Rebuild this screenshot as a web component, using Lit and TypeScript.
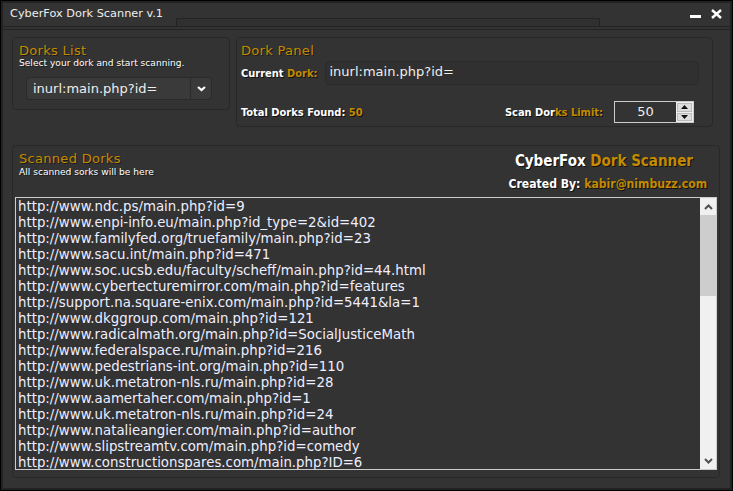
import { LitElement, css, html } from "lit";
import { customElement } from "lit/decorators.js";

const URLS = [
  "http://www.ndc.ps/main.php?id=9",
  "http://www.enpi-info.eu/main.php?id_type=2&id=402",
  "http://www.familyfed.org/truefamily/main.php?id=23",
  "http://www.sacu.int/main.php?id=471",
  "http://www.soc.ucsb.edu/faculty/scheff/main.php?id=44.html",
  "http://www.cybertecturemirror.com/main.php?id=features",
  "http://support.na.square-enix.com/main.php?id=5441&la=1",
  "http://www.dkggroup.com/main.php?id=121",
  "http://www.radicalmath.org/main.php?id=SocialJusticeMath",
  "http://www.federalspace.ru/main.php?id=216",
  "http://www.pedestrians-int.org/main.php?id=110",
  "http://www.uk.metatron-nls.ru/main.php?id=28",
  "http://www.aamertaher.com/main.php?id=1",
  "http://www.uk.metatron-nls.ru/main.php?id=24",
  "http://www.natalieangier.com/main.php?id=author",
  "http://www.slipstreamtv.com/main.php?id=comedy",
  "http://www.constructionspares.com/main.php?ID=6",
];

@customElement("app-root")
export class AppRoot extends LitElement {
  render() {
    return html`
      <div class="window">
        <header class="titlebar">
          <div class="tab">CyberFox Dork Scanner v.1</div>
          <div class="tab-rest"></div>
          <div class="controls">
            <span class="min"></span>
            <svg class="close" width="11" height="10" viewBox="0 0 11 10">
              <path d="M1 1 L10 9 M10 1 L1 9" stroke="#fff" stroke-width="2.4" fill="none" />
            </svg>
          </div>
        </header>
        <div class="rule"></div>

        <div class="top-row">
          <section class="panel list-panel">
            <h2>Dorks List</h2>
            <p class="hint">Select your dork and start scanning.</p>
            <div class="combo">
              <span class="combo-value">inurl:main.php?id=</span>
              <span class="combo-btn">
                <svg width="9" height="6" viewBox="0 0 9 6">
                  <path d="M1 1 L4.5 4 L8 1" stroke="#fff" stroke-width="2.2" fill="none" />
                </svg>
              </span>
            </div>
          </section>

          <section class="panel dork-panel">
            <h2>Dork Panel</h2>
            <div class="current">
              <span class="label">Current <b>Dork:</b></span>
              <div class="field">inurl:main.php?id=</div>
            </div>
            <div class="stats">
              <span class="label">Total Dorks Found: <b>50</b></span>
              <div class="limit">
                <span class="label">Scan Dor<b>ks Limit:</b></span>
                <div class="spinner">
                  <span class="spin-value">50</span>
                  <span class="spin-btns">
                    <i><svg width="7" height="4" viewBox="0 0 7 4"><path d="M3.5 0 L7 4 H0 Z" fill="#111" /></svg></i>
                    <i><svg width="7" height="4" viewBox="0 0 7 4"><path d="M0 0 H7 L3.5 4 Z" fill="#111" /></svg></i>
                  </span>
                </div>
              </div>
            </div>
          </section>
        </div>

        <section class="panel scanned">
          <div class="scanned-head">
            <div>
              <h2>Scanned Dorks</h2>
              <p class="hint scanned-hint">All scanned sorks will be here</p>
            </div>
            <div class="brand">
              <div class="brand-name">CyberFox <b>Dork Scanner</b></div>
              <div class="brand-by">Created By: <b>kabir@nimbuzz.com</b></div>
            </div>
          </div>
          <div class="results">
            <div class="lines">${URLS.map((u) => html`<div>${u}</div>`)}</div>
            <div class="scroll">
              <span class="arrow">
                <svg width="9" height="6" viewBox="0 0 9 6"><path d="M1 5 L4.5 1.5 L8 5" stroke="#505050" stroke-width="2" fill="none" /></svg>
              </span>
              <span class="thumb"></span>
              <span class="track"></span>
              <span class="arrow">
                <svg width="9" height="6" viewBox="0 0 9 6"><path d="M1 1 L4.5 4.5 L8 1" stroke="#505050" stroke-width="2" fill="none" /></svg>
              </span>
            </div>
          </div>
        </section>
      </div>
    `;
  }

  static styles = css`
    :host {
      display: block;
      width: 733px;
      height: 491px;
      font-family: "DejaVu Sans", Verdana, sans-serif;
      color: #fff;
    }

    * {
      box-sizing: border-box;
    }

    .window {
      width: 733px;
      height: 491px;
      background: #333;
      border: 1px solid #000;
      box-shadow: inset 0 0 0 2px #222;
      display: flex;
      flex-direction: column;
      overflow: hidden;
    }

    .titlebar {
      height: 26px;
      flex: none;
      display: flex;
      align-items: flex-end;
      border-bottom: 1px solid #232323;
      padding: 2px 2px 0;
    }

    .rule {
      height: 3px;
      flex: none;
      border-bottom: 1px solid #232323;
    }

    .tab {
      width: 173px;
      height: 23px;
      flex: none;
      padding: 4px 0 0 7px;
      font-size: 11.3px;
      line-height: 14px;
      color: #eee;
    }

    .tab-rest {
      width: 424px;
      height: 8px;
      flex: none;
      border: 1px solid #232323;
      border-bottom: none;
      background: #303030;
    }

    .controls {
      margin-left: auto;
      align-self: flex-start;
      display: flex;
      align-items: center;
      gap: 10px;
      padding: 6px 8px 0 0;
    }

    .min {
      width: 11px;
      height: 3px;
      margin-top: 5px;
      background: #fff;
    }

    .top-row {
      display: flex;
      align-items: flex-start;
      gap: 6px;
      padding: 7px 0 0 11px;
    }

    .panel {
      background: #333;
      border: 1px solid #282828;
      border-radius: 4px;
    }

    .list-panel {
      width: 218px;
      height: 73px;
      padding: 5px 6px;
    }

    .dork-panel {
      width: 477px;
      height: 90px;
      padding: 5px 4px;
    }

    h2 {
      margin: 0;
      font-size: 13px;
      line-height: 15px;
      font-weight: normal;
      letter-spacing: 0.3px;
      color: #c48a00;
      text-shadow: 1px 1px 0 #1c1c1c;
    }

    .hint {
      margin: 0;
      font-size: 9.1px;
      line-height: 11px;
      color: #fff;
      text-shadow: 1px 1px 0 #1c1c1c;
    }

    .scanned-hint {
      margin-top: 1px;
    }

    .combo {
      display: flex;
      align-items: stretch;
      width: 186px;
      height: 23px;
      margin: 8px 0 0 7px;
      border: 1px solid #2a2a2a;
      border-radius: 4px;
      background: #3a3a3a;
    }

    .combo-value {
      flex: 1;
      padding: 0 6px;
      font-size: 13px;
      line-height: 22px;
      color: #eee;
    }

    .combo-btn {
      width: 21px;
      display: flex;
      align-items: center;
      justify-content: center;
      border-left: 1px solid #2a2a2a;
    }

    .label {
      font-family: "DejaVu Sans Condensed", "DejaVu Sans", sans-serif;
      font-size: 11px;
      font-weight: bold;
      color: #fff;
      text-shadow: 1px 1px 0 #111;
      white-space: nowrap;
    }

    .label b,
    .brand b {
      color: #c48a00;
    }

    .current {
      display: flex;
      align-items: center;
      gap: 8px;
      margin-top: 3px;
    }

    .field {
      width: 374px;
      height: 24px;
      padding: 0 3px;
      border: 1px solid #2a2a2a;
      border-radius: 4px;
      background: #303030;
      font-size: 13px;
      line-height: 20px;
      color: #eee;
    }

    .stats {
      display: flex;
      align-items: center;
      justify-content: space-between;
      margin-top: 16px;
      padding-right: 14px;
    }

    .limit {
      display: flex;
      align-items: center;
      gap: 11px;
    }

    .spinner {
      width: 80px;
      height: 22px;
      display: flex;
      border: 1px solid #ccc;
      background: #333;
    }

    .spin-value {
      flex: 1;
      text-align: center;
      font-size: 13px;
      line-height: 19px;
      color: #eee;
    }

    .spin-btns {
      width: 17px;
      display: flex;
      flex-direction: column;
      gap: 1px;
      padding: 1px;
      background: #eee;
    }

    .spin-btns i {
      flex: 1;
      display: flex;
      align-items: center;
      justify-content: center;
      background: #ddd;
      border: 1px solid #bbb;
    }

    .scanned {
      width: 708px;
      height: 333px;
      margin: 18px 0 0 11px;
      padding: 5px 2px 7px;
      display: flex;
      flex-direction: column;
    }

    .scanned-head {
      height: 46px;
      flex: none;
      display: flex;
      justify-content: space-between;
      padding: 0 10px 0 4px;
    }

    .brand {
      text-align: right;
      font-weight: bold;
      font-family: "DejaVu Sans Condensed", "DejaVu Sans", sans-serif;
      text-shadow: 1px 1px 0 #111;
      white-space: nowrap;
    }

    .brand-name {
      font-size: 15px;
      line-height: 20px;
      margin-right: 14px;
    }

    .brand-by {
      margin-top: 6px;
      font-size: 12.1px;
      line-height: 15px;
    }

    .results {
      flex: 1;
      min-height: 0;
      display: flex;
      border: 1px solid #ccc;
      background: #333;
    }

    .lines {
      flex: 1;
      overflow: hidden;
      padding: 1px 0 0 2px;
      font-size: 13.33px;
      line-height: 16px;
      color: #eef;
      white-space: nowrap;
    }

    .scroll {
      width: 16px;
      flex: none;
      display: flex;
      flex-direction: column;
      background: #f0f0f0;
    }

    .arrow {
      height: 17px;
      flex: none;
      display: flex;
      align-items: center;
      justify-content: center;
    }

    .thumb {
      height: 81px;
      flex: none;
      background: #cdcdcd;
    }

    .track {
      flex: 1;
    }
  `;
}

declare global {
  interface HTMLElementTagNameMap {
    "app-root": AppRoot;
  }
}
